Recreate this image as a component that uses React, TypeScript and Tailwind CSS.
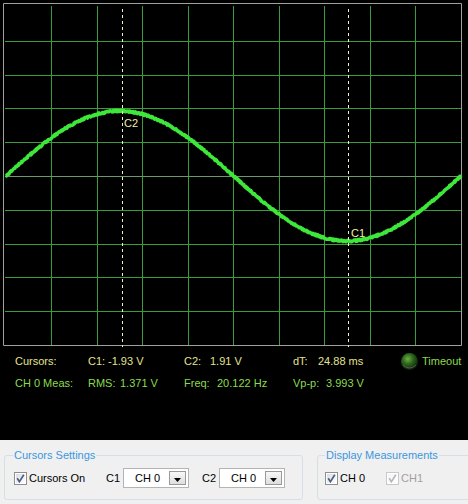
import React from "react";

function Scope() {
  let s = 987654;
  const r = () => {
    s = (s * 1103515245 + 12345) % 2147483648;
    return s / 2147483648;
  };
  const pts: string[] = [];
  for (let x = 6; x <= 461; x += 0.5) {
    const y = 176 - 65 * Math.sin((2 * Math.PI * (x - 6)) / 455) + (r() - 0.5) * 1.8;
    pts.push(`${x.toFixed(1)},${y.toFixed(2)}`);
  }
  const vx = Array.from({ length: 9 }, (_, i) => Math.round(5.5 + (i + 1) * 45.5) + 0.5);
  const hy = Array.from({ length: 9 }, (_, i) => Math.round(7 + (i + 1) * 33.8) + 0.5);
  return (
    <svg width="468" height="350" viewBox="0 0 468 350" className="block">
      <rect x="0" y="0" width="468" height="350" fill="#000" />
      {vx.map((x) => (
        <line key={"v" + x} x1={x} y1="6" x2={x} y2="345" stroke="#3a9c3a" strokeWidth="1" />
      ))}
      {hy.map((y) => (
        <line key={"h" + y} x1="5" y1={y} x2="461" y2={y} stroke={y === 176.5 ? "#6a9a6a" : "#3a9c3a"} strokeWidth="1" />
      ))}
      <polyline points="3.5,345.5 3.5,3.5 461.5,3.5 461.5,345.5 3.5,345.5" fill="none" stroke="#a0a0a0" strokeWidth="1" />
      <polyline points={pts.join(" ")} fill="none" stroke="#3ee83a" strokeWidth="3.4" strokeLinejoin="round" />
      <line x1="122.5" y1="9" x2="122.5" y2="347" stroke="#f2f2c8" strokeWidth="1" strokeDasharray="3 3" />
      <line x1="348.5" y1="9" x2="348.5" y2="347" stroke="#f2f2c8" strokeWidth="1" strokeDasharray="3 3" />
      <text x="124" y="127" fill="#f0f0a8" fontSize="11" fontFamily="Liberation Sans, Arial, sans-serif">C2</text>
      <text x="351" y="237" fill="#f0f0a8" fontSize="11" fontFamily="Liberation Sans, Arial, sans-serif">C1</text>
    </svg>
  );
}

function Led() {
  return (
    <svg width="19" height="19" viewBox="0 0 19 19">
      <defs>
        <radialGradient id="led" cx="40%" cy="35%" r="65%">
          <stop offset="0%" stopColor="#6fae4a" />
          <stop offset="45%" stopColor="#2f6a1c" />
          <stop offset="100%" stopColor="#0c220a" />
        </radialGradient>
      </defs>
      <circle cx="9.5" cy="9.5" r="8.5" fill="url(#led)" />
      <path d="M3 13 Q9.5 19 16 13" stroke="#6b6b6b" strokeWidth="1" fill="none" opacity="0.7" />
    </svg>
  );
}

function Check({ disabled }: { disabled?: boolean }) {
  return (
    <svg width="13" height="13" viewBox="0 0 13 13" className="shrink-0">
      <defs>
        <linearGradient id={disabled ? "cbd" : "cb"} x1="0" y1="0" x2="1" y2="1">
          <stop offset="0%" stopColor={disabled ? "#f4f4f4" : "#dcdcdc"} />
          <stop offset="100%" stopColor="#ffffff" />
        </linearGradient>
      </defs>
      <rect x="0.5" y="0.5" width="12" height="12" fill="#fff" stroke={disabled ? "#c8c8c8" : "#8e8f8f"} />
      <rect x="2" y="2" width="9" height="9" fill={`url(#${disabled ? "cbd" : "cb"})`} />
      <path d="M3.2 6.2 L5.4 9.6 L9.8 2.8" stroke={disabled ? "#b4b8c0" : "#4a5f8a"} strokeWidth="1.7" fill="none" />
    </svg>
  );
}

function Combo() {
  return (
    <div className="flex items-center w-[66px] h-[20px] bg-white border border-[#b4b4b4] shrink-0">
      <span className="flex-1 text-center pl-[2px]">CH 0</span>
      <div className="w-[17px] h-[14px] mr-[2px] border border-[#9a9a9a] bg-gradient-to-b from-[#f8f8f8] to-[#dedede] flex items-end justify-center pb-[2px]">
        <svg width="7" height="4" viewBox="0 0 7 4">
          <path d="M0 0 H7 L3.5 4 Z" fill="#000" />
        </svg>
      </div>
    </div>
  );
}

export default function App() {
  const font = { fontFamily: '"Liberation Sans", Arial, sans-serif' };
  return (
    <div className="w-[468px] h-[504px] bg-black flex flex-col overflow-hidden" style={font}>
      <Scope />
      <div className="h-[90px] text-[11px] leading-[14px]">
        <div className="h-[22px] flex items-center text-[#e4e48e] pl-[15px]">
          <span className="w-[73px]">Cursors:</span>
          <span className="w-[96px] flex">
            <span className="w-[20px]">C1:</span>
            <span>-1.93 V</span>
          </span>
          <span className="w-[109px] flex">
            <span className="w-[26px]">C2:</span>
            <span>1.91 V</span>
          </span>
          <span className="w-[107px] flex">
            <span className="w-[25px]">dT:</span>
            <span>24.88 ms</span>
          </span>
          <span className="flex items-center">
            <Led />
            <span className="ml-[3px] text-[#8adc4c]">Timeout</span>
          </span>
        </div>
        <div className="h-[22px] flex items-center text-[#8adc4c] pl-[15px]">
          <span className="w-[73px]">CH 0 Meas:</span>
          <span className="w-[96px] flex">
            <span className="w-[32px]">RMS:</span>
            <span>1.371 V</span>
          </span>
          <span className="w-[109px] flex">
            <span className="w-[33px]">Freq:</span>
            <span>20.122 Hz</span>
          </span>
          <span className="w-[107px] flex">
            <span className="w-[33px]">Vp-p:</span>
            <span>3.993 V</span>
          </span>
        </div>
      </div>
      <div className="flex-1 bg-[#f0f0f0] flex items-start pt-[8px] text-[11px] leading-[14px] text-black">
        <fieldset className="shrink-0 ml-[4px] w-[299px] h-[52px] border border-[#d5dfe5] rounded-[3px] px-[9px] pb-0 m-0">
          <legend className="px-[1px] ml-[-1px] text-[#3b97e0]">Cursors Settings</legend>
          <div className="flex items-center h-[20px] mt-[6px]">
            <Check />
            <span className="ml-[2px] w-[77px]">Cursors On</span>
            <span className="w-[17px]">C1</span>
            <Combo />
            <span className="ml-[13px] w-[17px]">C2</span>
            <Combo />
          </div>
        </fieldset>
        <fieldset className="shrink-0 ml-[14px] w-[160px] h-[52px] border border-[#d5dfe5] rounded-[3px] px-[7px] pb-0 m-0">
          <legend className="px-[1px] text-[#3b97e0]">Display Measurements</legend>
          <div className="flex items-center h-[20px] mt-[6px]">
            <Check />
            <span className="ml-[2px] w-[46px]">CH 0</span>
            <Check disabled />
            <span className="ml-[2px] text-[#a0a0a0]">CH1</span>
          </div>
        </fieldset>
      </div>
    </div>
  );
}
